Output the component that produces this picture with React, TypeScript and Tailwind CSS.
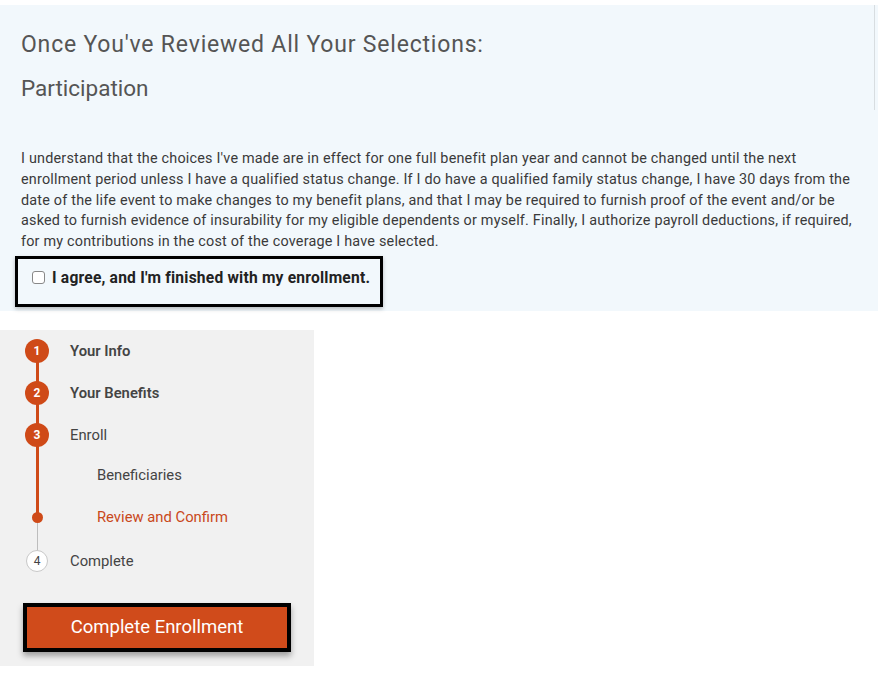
import React from 'react';

const steps = [
  { key: 'info', num: '1', label: 'Your Info', kind: 'done' },
  { key: 'benefits', num: '2', label: 'Your Benefits', kind: 'done' },
  { key: 'enroll', num: '3', label: 'Enroll', kind: 'current' },
];

const terms = [
  "I understand that the choices I've made are in effect for one full benefit plan year and cannot be changed until the next",
  'enrollment period unless I have a qualified status change. If I do have a qualified family status change, I have 30 days from the',
  'date of the life event to make changes to my benefit plans, and that I may be required to furnish proof of the event and/or be',
  'asked to furnish evidence of insurability for my eligible dependents or myself. Finally, I authorize payroll deductions, if required,',
  'for my contributions in the cost of the coverage I have selected.',
];

const App: React.FC = () => {
  return (
    <div className="w-[880px] h-[683px] bg-white font-['Roboto',sans-serif] overflow-hidden">
      {/* Confirmation panel */}
      <div className="relative mt-[5px] w-[878px] h-[306px] bg-[#f2f8fc] pl-[21px] pt-[25px]">
        <div className="absolute right-[3px] top-0 h-[105px] w-px bg-[#d8dde0]"></div>
        <h1 className="text-[23px] leading-[30px] tracking-[0.8px] text-[#555]">Once You've Reviewed All Your Selections:</h1>
        <h2 className="mt-[13px] text-[22.5px] leading-[30px] text-[#555]">Participation</h2>
        <p className="mt-[46px] text-[14.4px] leading-[20.8px] text-[#3a3a3a] tracking-[0.2px] whitespace-nowrap">
          {terms.map((line, i) => (
            <span key={i} className="block">{line}</span>
          ))}
        </p>
        <div className="-ml-[6px] mt-[3px] w-[368px] h-[51px] border-[3px] border-black shadow-[0_2px_4px_rgba(0,0,0,0.25)] flex items-start pt-[8px] pl-[14px]">
          <label className="flex items-center gap-[7px]">
            <span className="w-[13px] h-[13px] rounded-[3px] border border-[#888] bg-white"></span>
            <span className="text-[15.6px] leading-[22px] font-bold text-[#222] tracking-[0.2px]">I agree, and I'm finished with my enrollment.</span>
          </label>
        </div>
      </div>

      {/* Stepper panel */}
      <div className="relative mt-[19px] w-[314px] h-[336px] bg-[#f1f1f1]">
        <div className="absolute left-[36px] top-[21px] h-[166px] w-[3px] bg-[#cf4a18]"></div>
        <div className="absolute left-[37px] top-[187px] h-[44px] w-px bg-[#bdbdbd]"></div>

        {steps.map(s => (
          <div key={s.key} className="relative h-[42px] flex items-center">
            <span className="ml-[25px] w-[24px] h-[24px] rounded-full bg-[#cf4a18] text-white text-[12px] font-bold flex items-center justify-center">{s.num}</span>
            <span className={`ml-[21px] text-[14.8px] text-[#444] ${s.kind === 'done' ? 'font-semibold' : ''}`}>{s.label}</span>
          </div>
        ))}
        <div className="h-[38px] flex items-center">
          <span className="ml-[97px] text-[14.8px] text-[#444]">Beneficiaries</span>
        </div>
        <div className="relative h-[46px] flex items-center">
          <span className="absolute left-[32px] w-[11px] h-[11px] rounded-full bg-[#cf4a18]"></span>
          <span className="ml-[97px] text-[14.8px] text-[#c9481b]">Review and Confirm</span>
        </div>
        <div className="relative h-[42px] flex items-center">
          <span className="ml-[26px] w-[22px] h-[22px] rounded-full bg-white border border-[#c8c8c8] text-[12px] text-[#444] flex items-center justify-center">4</span>
          <span className="ml-[22px] text-[14.8px] text-[#444]">Complete</span>
        </div>

        <div className="mt-[21px] ml-[23px] w-[268px] h-[49px] border-[4px] border-black shadow-[0_4px_6px_rgba(0,0,0,0.35)]">
          <button className="w-full h-full bg-[#d04b1b] text-white text-[18.5px] flex items-center justify-center">
            Complete Enrollment
          </button>
        </div>
      </div>
    </div>
  );
};

export default App;
